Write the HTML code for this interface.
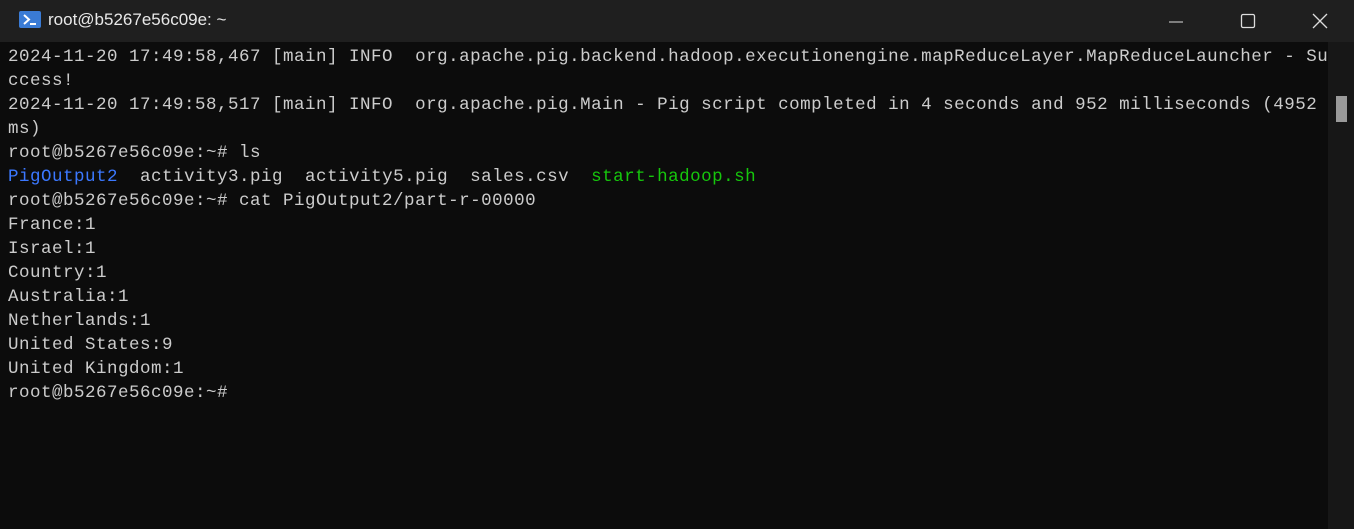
<!DOCTYPE html>
<html><head><meta charset="utf-8"><style>
html,body{margin:0;padding:0;width:1354px;height:529px;overflow:hidden;background:#0c0c0c;}
.title{position:absolute;left:0;top:0;width:1354px;height:42px;background:#1f1f1f;}
.title .t{position:absolute;left:48px;top:10px;font:17px "Liberation Sans",sans-serif;color:#e8e8e8;}
.ico{position:absolute;left:19px;top:11px;width:22px;height:17px;background:#3a7bd5;border-radius:2px;}
.term{position:absolute;left:0;top:42px;width:1328px;height:487px;background:#0c0c0c;}
pre{margin:0;position:absolute;left:8px;top:3px;font-family:"Liberation Mono",monospace;font-size:17.5px;letter-spacing:0.5px;line-height:24px;color:#cccccc;white-space:pre;}
.b{color:#3b78ff}.g{color:#16c60c}
.sb{position:absolute;left:1328px;top:42px;width:26px;height:487px;background:#171717;}
.th{position:absolute;left:1336px;top:96px;width:11px;height:26px;background:#9a9a9a;}
</style></head><body>
<div class="title">
<div class="ico"><svg width="22" height="17" viewBox="0 0 22 17"><path d="M5 4 L10 8.5 L5 13" stroke="#fff" stroke-width="2" fill="none"/><path d="M11 13 H17" stroke="#fff" stroke-width="2"/></svg></div>
<div class="t">root@b5267e56c09e: ~</div>
<svg style="position:absolute;left:1165px;top:12px" width="20" height="20"><path d="M4 10 H18" stroke="#ddd" stroke-width="1"/></svg>
<svg style="position:absolute;left:1239px;top:12px" width="20" height="20"><rect x="2.5" y="2.5" width="13" height="13" rx="1.5" stroke="#ddd" stroke-width="1.3" fill="none"/></svg>
<svg style="position:absolute;left:1311px;top:12px" width="20" height="20"><path d="M2 2 L16 16 M16 2 L2 16" stroke="#ddd" stroke-width="1.3"/></svg>
</div>
<div class="term"><pre>2024-11-20 17:49:58,467 [main] INFO  org.apache.pig.backend.hadoop.executionengine.mapReduceLayer.MapReduceLauncher - Su
ccess!
2024-11-20 17:49:58,517 [main] INFO  org.apache.pig.Main - Pig script completed in 4 seconds and 952 milliseconds (4952
ms)
root@b5267e56c09e:~# ls
<span class="b">PigOutput2</span>  activity3.pig  activity5.pig  sales.csv  <span class="g">start-hadoop.sh</span>
root@b5267e56c09e:~# cat PigOutput2/part-r-00000
France:1
Israel:1
Country:1
Australia:1
Netherlands:1
United States:9
United Kingdom:1
root@b5267e56c09e:~#</pre></div>
<div class="sb"></div><div class="th"></div>
</body></html>
